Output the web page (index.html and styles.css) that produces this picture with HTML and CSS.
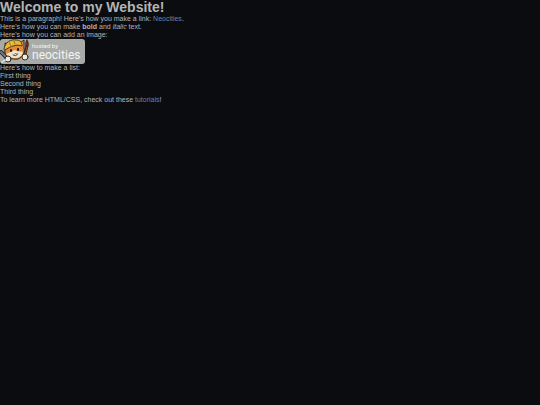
FILE: index.html
```html
<!DOCTYPE html>
<html lang="en">
<head>
<meta charset="UTF-8">
<meta name="viewport" content="width=device-width, initial-scale=1">
<title>Welcome to my Website!</title>
<link rel="stylesheet" href="styles.css">
</head>
<body>
<h1>Welcome to my Website!</h1>
<p>This is a paragraph! Here's how you make a link: <a href="#">Neocities</a>.</p>
<p>Here's how you can make <strong>bold</strong> and <em>italic</em> text.</p>
<p>Here's how you can add an image:</p>
<svg class="badge" viewBox="0 0 85 25" role="img" aria-label="hosted by neocities">
  <rect width="85" height="25" rx="3" fill="#a9aba8"/>
  <g stroke-linejoin="round" stroke-linecap="round">
    <path d="M1 13 L9 21" stroke="#25282b" stroke-width="4"/>
    <path d="M1 13 L9 21" stroke="#777b7c" stroke-width="2"/>
    <path d="M5 8 L5 4 L10 5 L20 4 L24 1 L24 9 C25 14 23 18 18 20 C12 21 6 18 5 14 Z" fill="#e18b38" stroke="#33271e" stroke-width="1"/>
    <path d="M6 15 C9 14 12 12 15 11 C17 13 21 12 23 13 C22 17 19 19 15 19 C11 19 8 18 6 15 Z" fill="#eee4d4"/>
    <path d="M4 10 C5 3 11 0 16 1 C20 1 22 3 22 7 C17 5 11 7 5 11 Z" fill="#e3b936" stroke="#49391c" stroke-width="1"/>
    <path d="M9 3 L11 7 M14 2 L15 5" stroke="#a17829" stroke-width="1"/>
    <path d="M11 11 L11 12 M18 10 L18 11" stroke="#201a17" stroke-width="2"/>
    <path d="M14 14 L17 14 L16 15 Z" fill="#9c4b30"/>
    <path d="M13 16 Q16 18 18 15" fill="none" stroke="#493229" stroke-width="1"/>
    <path d="M25 15 L27 7" stroke="#392417" stroke-width="3"/>
    <path d="M25 15 L27 8" stroke="#9b542f" stroke-width="1"/>
    <path d="M27 1 Q29 4 28 7 L26 7 Q25 4 27 1" fill="#962f29" stroke="#392417" stroke-width="1"/>
    <circle cx="25" cy="18" r="3" fill="#f0ece2" stroke="#392b24" stroke-width="1"/>
    <circle cx="8" cy="20" r="3" fill="#f0ece2" stroke="#392b24" stroke-width="1"/>
    <path d="M2 23 L5 21" stroke="#d8dad8" stroke-width="2"/>
  </g>
  <text class="badge-small" x="32" y="9">hosted by</text>
  <text class="badge-name" x="32" y="20">neocities</text>
</svg>
<p>Here's how to make a list:</p>
<ul>
  <li>First thing</li>
  <li>Second thing</li>
  <li>Third thing</li>
</ul>
<p>To learn more HTML/CSS, check out these <a href="#">tutorials</a>!</p>
</body>
</html>
```
FILE: styles.css
```css
* {
  margin: 0;
  padding: 0;
}

body {
  background: #0a0c10;
  color: #b4b4b4;
  font-family: "Liberation Sans", Arial, sans-serif;
  font-size: 7px;
  line-height: 8px;
}

h1 {
  font-size: 14px;
  line-height: 15px;
}

a {
  color: #6681b0;
  text-decoration: none;
}

ul {
  list-style: none;
}

.badge {
  display: block;
  width: 85px;
  height: 25px;
}

.badge text {
  fill: #f4f4f4;
  font-family: Roboto, "Open Sans", sans-serif;
}

.badge-small {
  font-size: 6px;
}

.badge-name {
  font-size: 12px;
}
```
